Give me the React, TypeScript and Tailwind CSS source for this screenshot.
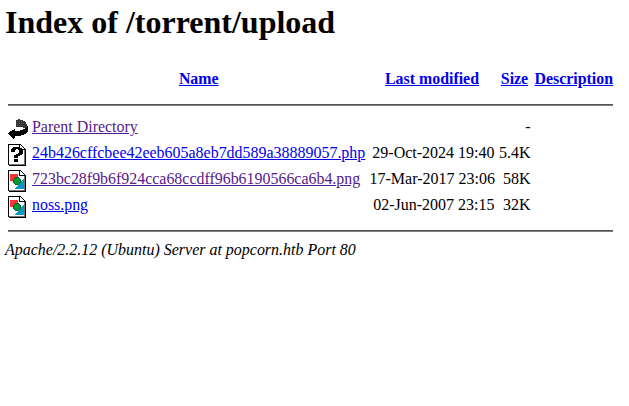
import type { ReactNode } from "react";

function Page({ children }: { children: ReactNode }) {
  return (
    <svg width="20" height="22" viewBox="0 0 20 22" shapeRendering="crispEdges" className="block">
      <path d="M0 0h13v1h1v1h1v1h1v1h1v1h1v17H1v-1H0z" fill="#000" />
      <path d="M1 1h10v5h5v14H1z" fill="#fff" />
      <path d="M12 1h1v1h1v1h1v1h1v1h-4z" fill="#fff" />
      <path d="M1 20h15v-14h1v15H1z" fill="#777" />
      {children}
    </svg>
  );
}

function BackIcon() {
  return (
    <svg width="20" height="22" viewBox="0 0 20 22" shapeRendering="crispEdges" className="block">
      <g transform="translate(0 1)">
        <path d="M8 1h2V0h2v1h3v1h2v1h1v2h1v2h1v4h-1v1h-2V9h-2V8H8z" fill="#333" />
        <path d="M9 2h1v1H9zm2 0h1v1h-1zm2 0h1v1h-1zM9 4h1v1H9zm2 0h1v1h-1zm2 0h1v1h-1zm2 0h1v1h-1zM9 6h1v1H9zm2 0h1v1h-1zm2 0h1v1h-1z" fill="#555" />
        <path d="M19 7h1v6h-1v1h-1v1h-2v1h-3v1H7v2H6v1H5v-1H4v-1H3v-1H2v-1H1v-1H0v-1h1v-1h1v-1h2v-1h2v-1h1v2h5v-1h3v-1h2v-1h1V9h1z" fill="#000" />
      </g>
    </svg>
  );
}

function UnknownIcon() {
  return (
    <Page>
      <path d="M5 3h7v1h2v1h1v5h-1v1h-2v1h-2v2H6v-3h2v-1h2V9h1V6h-1V5H8v1H7v2H3V5h1V4h1zM6 15h4v3H6z" fill="#000" />
    </Page>
  );
}

function ImageIcon() {
  return (
    <Page>
      <path d="M2 4h8v7H2z" fill="#f33" />
      <path d="M15 9h1v10H7v-1h1v-1h1v-1h1v-1h1v-2h1v-1h1v-1h1v-1h1z" fill="#0099cc" />
      <path d="M7 7h4v1h1v1h1v4h-1v1h-1v1H7v-1H6v-1H5V9h1V8h1z" fill="#063" />
      <path d="M7 8h4v1h1v4h-1v1H7v-1H6V9h1z" fill="#093" />
    </Page>
  );
}

const rows = [
  { icon: <BackIcon />, name: "Parent Directory", style: "text-[#551a8b] text-[15.95px]", date: "", size: "-" },
  {
    icon: <UnknownIcon />,
    name: "24b426cffcbee42eeb605a8eb7dd589a38889057.php",
    style: "text-[#0000ee] text-[15.96px]",
    date: "29-Oct-2024 19:40",
    size: "5.4K",
  },
  {
    icon: <ImageIcon />,
    name: "723bc28f9b6f924cca68ccdff96b6190566ca6b4.png",
    style: "text-[#551a8b] text-[15.93px]",
    date: "17-Mar-2017 23:06",
    size: "58K",
  },
  {
    icon: <ImageIcon />,
    name: "noss.png",
    style: "text-[#0000ee] text-[15.9px]",
    date: "02-Jun-2007 23:15",
    size: "32K",
  },
];

function Rule() {
  return (
    <tr>
      <td colSpan={5} className="p-px">
        <hr className="my-2 h-0.5 border-0 border-t border-b border-t-[#555] border-b-[#808080]" />
      </td>
    </tr>
  );
}

export default function App() {
  return (
    <main className="h-[406px] overflow-hidden bg-white pl-[5px] pt-1 font-['Liberation_Serif',serif] text-[16px] leading-[18px] text-black">
      <h1 className="mb-[26px] text-[32px] font-bold leading-[37px]">Index of /torrent/upload</h1>
      <table className="w-[611px] table-fixed border-separate border-spacing-[2px] whitespace-nowrap">
        <colgroup>
          <col className="w-[22px]" />
          <col className="w-[335.5px]" />
          <col className="w-[127px]" />
          <col className="w-[34px]" />
          <col className="w-[80.5px]" />
        </colgroup>
        <tbody>
          <tr className="h-6 text-[#0000ee]">
            <th className="p-px" />
            {["Name", "Last modified", "Size", "Description"].map((label) => (
              <th key={label} className="p-px text-center align-top text-[15.9px] font-bold">
                <a className="underline">{label}</a>
              </th>
            ))}
          </tr>
          <Rule />
          {rows.map((row) => (
            <tr key={row.name} className="h-6 align-top">
              <td className="p-px">{row.icon}</td>
              <td className="p-px">
                <a className={`underline ${row.style}`}>{row.name}</a>
              </td>
              <td className="p-px text-right">{row.date}</td>
              <td className="p-px text-right">{row.size}</td>
              <td className="p-px" />
            </tr>
          ))}
          <Rule />
        </tbody>
      </table>
      <address className="-mt-0.5 text-[15.97px] italic">Apache/2.2.12 (Ubuntu) Server at popcorn.htb Port 80</address>
    </main>
  );
}
